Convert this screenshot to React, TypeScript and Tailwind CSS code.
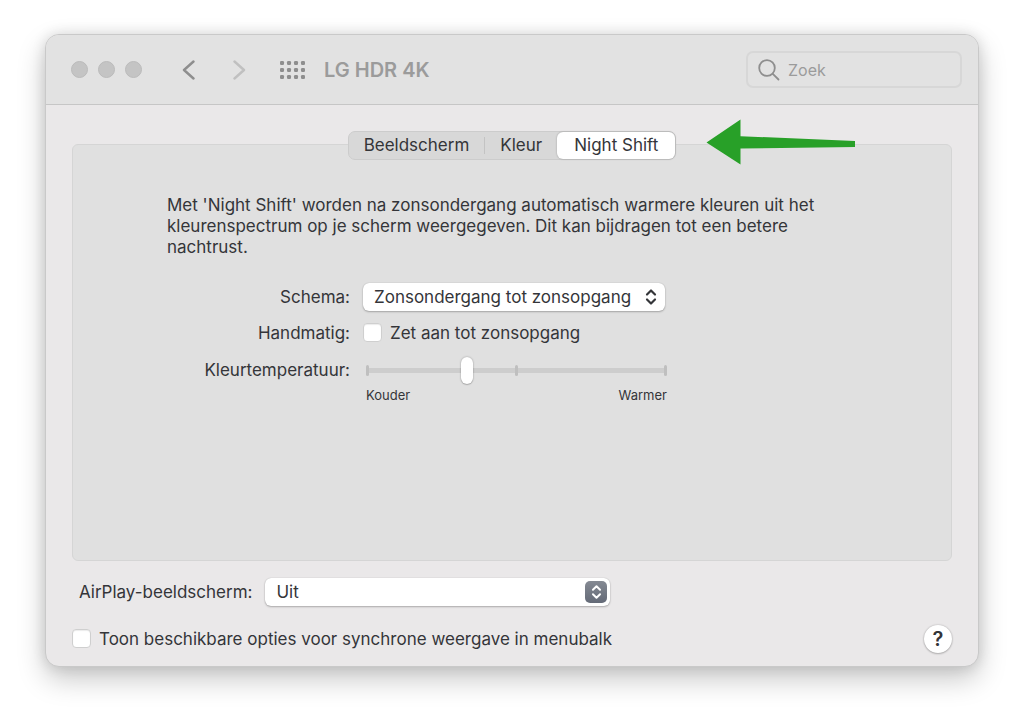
import { useState } from "react";

const tabs = ["Beeldscherm", "Kleur", "Night Shift"];

const checkboxClass =
  "mb-0.5 size-[19px] shrink-0 appearance-none rounded-[4px] border border-[#cfcfcf] bg-white shadow-[inset_0_1px_1px_rgba(0,0,0,0.08)] checked:border-blue-500 checked:bg-blue-500";

const selectClass =
  "block h-7 w-full appearance-none rounded-[6px] bg-white pl-[11px] pr-8 leading-7 shadow-[0_0_1px_rgba(0,0,0,0.25),0_1px_2px_rgba(0,0,0,0.25)]";

function UpDown({ className }: { className: string }) {
  return (
    <svg viewBox="0 0 12 18" fill="none" stroke="currentColor" strokeLinecap="round" strokeLinejoin="round" className={className} aria-hidden="true">
      <path d="M2 6.5 6 2.5l4 4M2 11.5l4 4 4-4" />
    </svg>
  );
}

function TitleBar() {
  return (
    <header className="flex h-[70px] items-center border-b border-[#c6c6c6] bg-[#e2e2e2] pl-[25px] pr-4">
      <div className="flex gap-[10px]">
        {["Sluit", "Minimaliseer", "Zoom"].map((name) => (
          <button key={name} aria-label={name} className="size-[17px] rounded-full border border-[#bbbbbb] bg-[#c4c4c4]" />
        ))}
      </div>
      <button aria-label="Vorige" className="ml-10 text-[#8e8e8e]">
        <svg viewBox="0 0 14 20" fill="none" stroke="currentColor" strokeWidth="2.4" strokeLinecap="round" strokeLinejoin="round" className="h-5 w-[14px]">
          <path d="M11.5 1.5 2 10l9.5 8.5" />
        </svg>
      </button>
      <button aria-label="Volgende" className="ml-9 text-[#c0c0c0]">
        <svg viewBox="0 0 14 20" fill="none" stroke="currentColor" strokeWidth="2.4" strokeLinecap="round" strokeLinejoin="round" className="h-5 w-[14px]">
          <path d="M2.5 1.5 12 10l-9.5 8.5" />
        </svg>
      </button>
      <button aria-label="Toon alles" className="ml-[34px] text-[#8e8e8e]">
        <svg viewBox="0 0 25 18" fill="currentColor" className="h-[18px] w-[25px]">
          {[0, 7, 14].map((y) =>
            [0, 7, 14, 21].map((x) => <rect key={`${x}-${y}`} x={x} y={y} width="4" height="4" rx="1.2" />),
          )}
        </svg>
      </button>
      <h1 className="ml-[19px] text-[20px] font-semibold text-[#9b9b9b]">LG HDR 4K</h1>
      <label className="ml-auto flex h-[37px] w-[216px] items-center gap-2 rounded-[7px] border-2 border-[#d7d7d7] px-[10px]">
        <svg viewBox="0 0 22 22" fill="none" stroke="#8e8e8e" strokeWidth="1.8" strokeLinecap="round" className="size-[22px] shrink-0" aria-hidden="true">
          <circle cx="9" cy="9" r="7.8" />
          <path d="m14.8 14.8 5.7 5.7" />
        </svg>
        <input type="search" aria-label="Zoek" placeholder="Zoek" className="w-full min-w-0 bg-transparent text-[16px] outline-none placeholder:text-[#9b9b9b]" />
      </label>
    </header>
  );
}

export default function App() {
  const [active, setActive] = useState("Night Shift");
  const [temperature, setTemperature] = useState(33);

  return (
    <main className="bg-white px-[45px] pb-14 pt-[34px] font-['Inter','Liberation_Sans',sans-serif] text-[17px] leading-7 text-[#343539]">
      <div className="overflow-hidden rounded-[14px] border border-[#c9c9c9] bg-[#eae8e9] shadow-[0_12px_28px_rgba(0,0,0,0.22),0_0_14px_rgba(0,0,0,0.12)]">
        <TitleBar />
        <div className="px-[26px] pb-[13px] pt-[26px]">
          <div className="relative z-10 mx-auto w-fit">
            <div role="tablist" className="flex h-[29px] items-center rounded-[7px] border border-[#cccccc] bg-[#d8d8d8]">
              {tabs.map((tab) => (
                <button
                  key={tab}
                  role="tab"
                  aria-selected={tab === active}
                  onClick={() => setActive(tab)}
                  className={
                    tab === active
                      ? "h-[27px] rounded-[6px] bg-white px-[17px] leading-[27px] shadow-[0_0_2px_rgba(0,0,0,0.3)]"
                      : "border-[#c3c3c3] px-[15px] leading-[17px] first:border-r"
                  }
                >
                  {tab}
                </button>
              ))}
            </div>
            <svg viewBox="0 0 150 46" fill="#28a028" className="absolute -top-3 left-full ml-[30px] h-[46px] w-[150px]" aria-hidden="true">
              <path d="M0.5 23.5 34.5 0.5V17.2L149 22V28L34.5 29.5V45.5Z" />
            </svg>
          </div>

          <section className="-mt-4 min-h-[417px] rounded-[6px] border border-[#d5d5d5] bg-[#e0e0e0] px-[94px] pt-[50px]">
            <p className="max-w-[670px] leading-[21px]">
              Met 'Night Shift' worden na zonsondergang automatisch warmere kleuren uit het kleurenspectrum op je scherm
              weergegeven. Dit kan bijdragen tot een betere nachtrust.
            </p>
            <div className="mt-[25px] grid grid-cols-[183px_304px] items-center gap-x-[13px] gap-y-2">
              <label htmlFor="schema" className="text-right">Schema:</label>
              <div className="relative w-[302px]">
                <select id="schema" className={selectClass}>
                  <option>Zonsondergang tot zonsopgang</option>
                  <option>Aangepast</option>
                  <option>Uit</option>
                </select>
                <UpDown className="pointer-events-none absolute right-2 top-[5px] h-[18px] w-3 stroke-[2.2]" />
              </div>

              <span className="text-right">Handmatig:</span>
              <label className="flex h-7 items-center gap-2">
                <input type="checkbox" className={checkboxClass} />
                Zet aan tot zonsopgang
              </label>

              <label htmlFor="temperature" className="text-right">Kleurtemperatuur:</label>
              <div className="relative ml-[3px] h-[30px]">
                <div className="absolute inset-0 flex items-center" aria-hidden="true">
                  <div className="flex h-[5px] w-full items-center justify-between bg-[#cdcdcd]">
                    <i className="h-[11px] w-[3px] rounded-full bg-[#bfbfbf]" />
                    <i className="h-[11px] w-[3px] rounded-full bg-[#bfbfbf]" />
                    <i className="h-[11px] w-[3px] rounded-full bg-[#bfbfbf]" />
                  </div>
                </div>
                <input
                  id="temperature"
                  type="range"
                  min={0}
                  max={100}
                  value={temperature}
                  onChange={(e) => setTemperature(Number(e.target.value))}
                  className="relative block h-[30px] w-full appearance-none bg-transparent [&::-webkit-slider-thumb]:h-[27px] [&::-webkit-slider-thumb]:w-3 [&::-webkit-slider-thumb]:appearance-none [&::-webkit-slider-thumb]:rounded-full [&::-webkit-slider-thumb]:bg-white [&::-webkit-slider-thumb]:shadow-[0_0_2px_rgba(0,0,0,0.35),0_1px_1px_rgba(0,0,0,0.15)]"
                />
              </div>

              <div className="col-start-2 -mt-2 ml-[3px] flex justify-between text-[13px] leading-5">
                <span>Kouder</span>
                <span>Warmer</span>
              </div>
            </div>
          </section>

          <div className="mt-[17px] flex items-center gap-[13px] pl-[7px]">
            <label htmlFor="airplay">AirPlay-beeldscherm:</label>
            <div className="relative w-[345px]">
              <select id="airplay" className={selectClass}>
                <option>Uit</option>
                <option>Aan</option>
              </select>
              <span className="pointer-events-none absolute right-[3px] top-[3px] flex size-[22px] items-center justify-center rounded-[5px] bg-linear-to-b from-[#858a93] to-[#646a77] text-white">
                <UpDown className="h-4 w-[11px] stroke-[2.2]" />
              </span>
            </div>
          </div>

          <div className="mt-[19px] flex items-center justify-between">
            <label className="flex items-center gap-2">
              <input type="checkbox" className={checkboxClass} />
              Toon beschikbare opties voor synchrone weergave in menubalk
            </label>
            <button aria-label="Help" className="size-7 rounded-full bg-white text-[20px] font-semibold leading-7 shadow-[0_0_2px_rgba(0,0,0,0.25),0_1px_2px_rgba(0,0,0,0.2)]">
              ?
            </button>
          </div>
        </div>
      </div>
    </main>
  );
}
